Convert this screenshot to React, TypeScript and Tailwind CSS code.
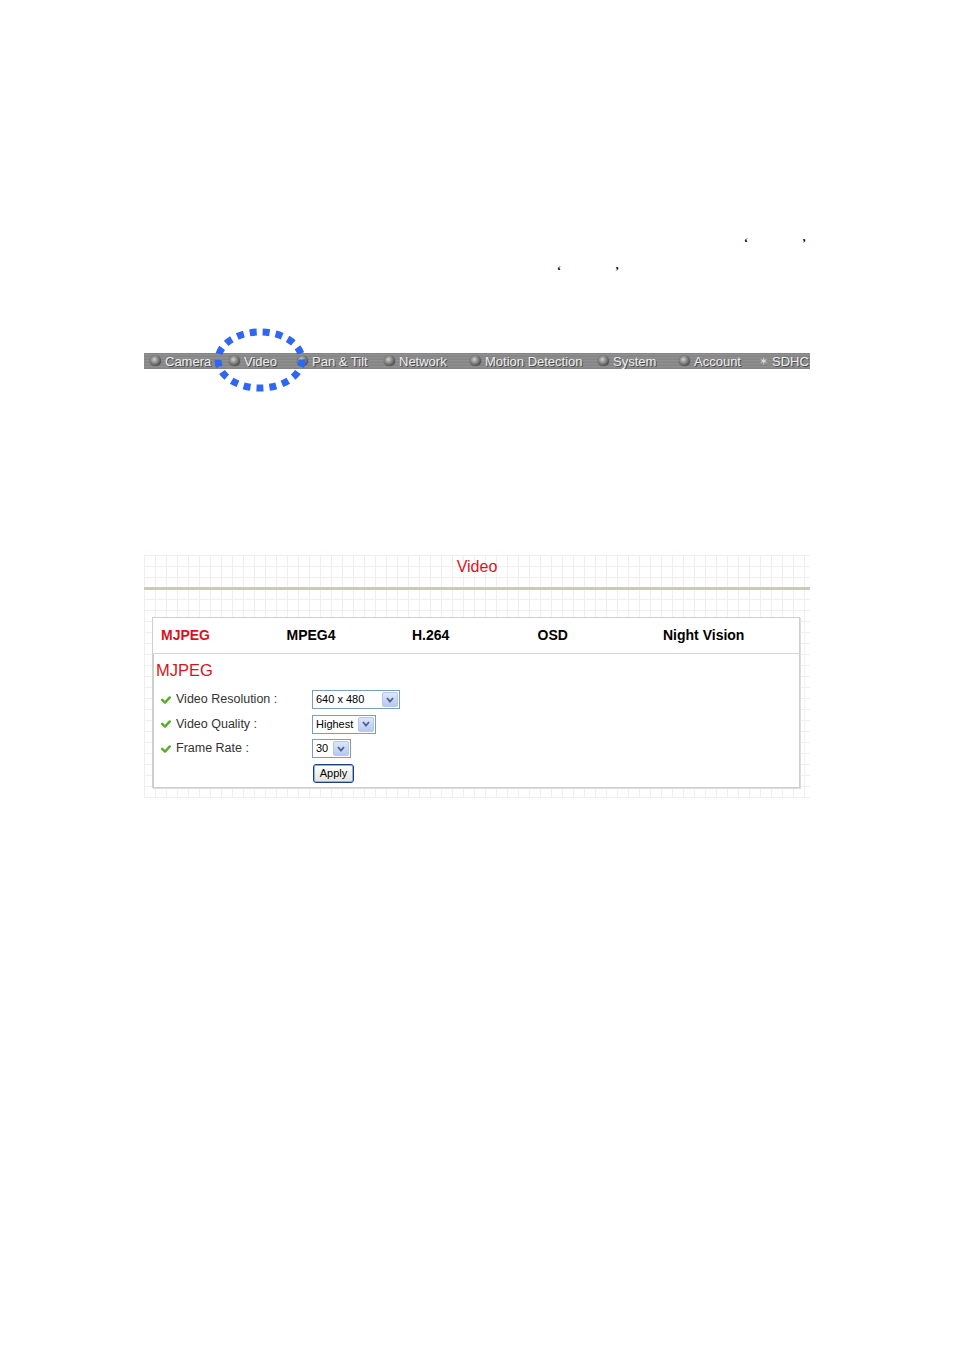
import React from 'react';

const navItems = [
  { label: 'Camera', w: 'w-[79px]' },
  { label: 'Video', w: 'w-[68px]' },
  { label: 'Pan & Tilt', w: 'w-[87px]' },
  { label: 'Network', w: 'w-[86px]' },
  { label: 'Motion Detection', w: 'w-[128px]' },
  { label: 'System', w: 'w-[81px]' },
  { label: 'Account', w: 'w-[80px]' },
  { label: 'SDHC', w: 'w-[55px]', star: true },
];

const tabs = ['MJPEG', 'MPEG4', 'H.264', 'OSD', 'Night Vision'];

const Ball = () => (
  <span className="inline-block w-[11px] h-[10px] rounded-full bg-[radial-gradient(circle_at_40%_35%,#cfcfcf,#4a4a4a_75%)] shadow-[0_0_1px_#333]" />
);

const Check = () => (
  <svg width="10" height="8" viewBox="0 0 10 8" className="shrink-0">
    <path d="M1.2 3.8 L4 6.6 L8.8 1.4" stroke="#56ad2a" strokeWidth="2.4" fill="none" strokeLinecap="round" strokeLinejoin="round" />
  </svg>
);

const Arrow = () => (
  <span className="flex items-center justify-center w-[16px] h-[15px] mr-[1px] rounded-[2px] bg-gradient-to-b from-[#dce6fb] to-[#b7c9f2] border border-[#b5c7ef]">
    <svg width="8" height="6" viewBox="0 0 8 6">
      <path d="M1 1 L4 4.5 L7 1" stroke="#4d6185" strokeWidth="1.8" fill="none" />
    </svg>
  </span>
);

const Select = ({ value, w }: { value: string; w: string }) => (
  <div className={`${w} h-[19px] border border-[#7f9db9] bg-white flex items-center justify-between pl-[3px]`}>
    <span className="text-[11px] text-black leading-none">{value}</span>
    <Arrow />
  </div>
);

const rows = [
  { label: 'Video Resolution :', value: '640 x 480', w: 'w-[88px]' },
  { label: 'Video Quality :', value: 'Highest', w: 'w-[64px]' },
  { label: 'Frame Rate :', value: '30', w: 'w-[39px]' },
];

export default function App() {
  return (
    <div className="w-[954px] h-[1350px] bg-white font-['Liberation_Sans',Arial,sans-serif]">
      {/* stray quote marks from the manual text */}
      <div className="pt-[237px] font-['Liberation_Serif',serif] text-[12px] font-bold leading-none text-black">
        <div className="flex h-[12px] pl-[744px]">
          <span>‘</span>
          <span className="ml-[54px]">’</span>
        </div>
        <div className="flex h-[12px] mt-[16px] pl-[557px]">
          <span>‘</span>
          <span className="ml-[54px]">’</span>
        </div>
      </div>

      {/* nav bar */}
      <div className="relative mt-[76px] ml-[144px] w-[666px]">
        <div className="flex h-[16px] items-center pl-[2px] overflow-hidden bg-[#8b8b8b] bg-[repeating-linear-gradient(0deg,#8e8e8e_0px,#7a7a7a_1px,#9a9a9a_2px,#858585_3px)]">
          {navItems.map(item => (
            <div key={item.label} className={`${item.w} shrink-0 flex items-center gap-[4px] pl-[4px]`}>
              {item.star ? (
                <span className="text-[11px] leading-none text-[#dcdcdc]">✶</span>
              ) : (
                <Ball />
              )}
              <span className="text-[13px] leading-none text-[#eeeeee] whitespace-nowrap [text-shadow:1px_1px_0_#4a4a4a]">
                {item.label}
              </span>
            </div>
          ))}
        </div>
        <svg className="absolute left-[70px] top-[-25px]" width="92" height="64" viewBox="0 0 92 64">
          <ellipse cx="46" cy="32" rx="42" ry="28" fill="none" stroke="#2f67f3" strokeWidth="7" strokeDasharray="7 6" />
        </svg>
      </div>

      {/* video settings panel */}
      <div className="mt-[186px] ml-[144px] w-[666px] h-[243px] bg-white bg-[linear-gradient(to_right,#f3eeee_1px,transparent_1px),linear-gradient(to_bottom,#f3eeee_1px,transparent_1px)] bg-[size:11px_11px]">
        <div className="h-[23px] flex items-center justify-center text-[16px] text-[#d7141c]">Video</div>
        <div className="mt-[9px] h-[3px] bg-[#cbcab6]" />
        <div className="mt-[27px] ml-[8px] w-[648px] h-[171px] bg-white border border-[#cfcfcf] shadow-[1px_1px_0_#dcdcdc]">
          <div className="h-[36px] flex items-center border-b border-[#d6d6d6] pl-[8px]">
            {tabs.map((t, i) => (
              <div
                key={t}
                className={`w-[125.5px] text-[14px] font-bold ${i === 0 ? 'text-[#d7141c]' : 'text-black'}`}
              >
                {t}
              </div>
            ))}
          </div>
          <div className="border-l border-[#cfcfcf] h-[133px] pl-[2px]">
            <div className="pt-[6px] text-[16.5px] leading-[20px] text-[#d7141c]">MJPEG</div>
            <div className="mt-[10px] flex flex-col gap-[5.5px]">
              {rows.map(r => (
                <div key={r.label} className="flex items-center h-[19px]">
                  <div className="w-[156px] flex items-center gap-[5px] pl-[5px]">
                    <Check />
                    <span className="text-[12.5px] text-[#333]">{r.label}</span>
                  </div>
                  <Select value={r.value} w={r.w} />
                </div>
              ))}
              <div className="pl-[157px] -mt-[4px]">
                <button className="w-[41px] h-[19px] rounded-[3px] border border-[#1d3f80] bg-gradient-to-b from-white to-[#e4e3dc] text-[11px] text-black leading-none shadow-[inset_0_0_0_1px_#8fb0e8]">
                  Apply
                </button>
              </div>
            </div>
          </div>
        </div>
      </div>
    </div>
  );
}
